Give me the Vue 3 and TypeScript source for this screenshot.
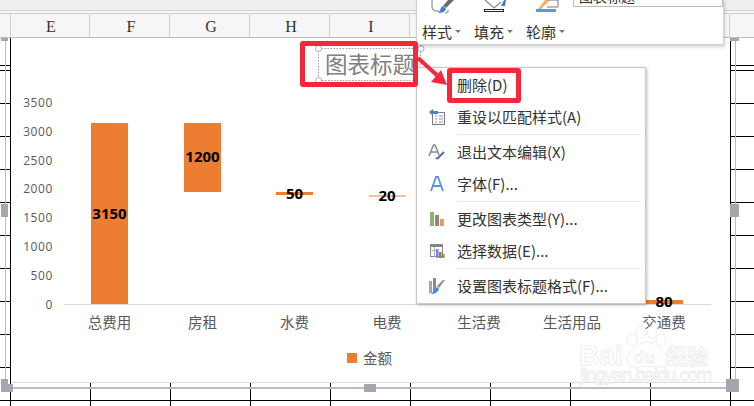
<script setup lang="ts">
const columns: string[] = ['E', 'F', 'G', 'H', 'I', 'J', 'K', 'L', 'M']

const yTicks = [
  { label: '3500', y: 102 }, { label: '3000', y: 131 }, { label: '2500', y: 160 }, { label: '2000', y: 188.5 },
  { label: '1500', y: 217.5 }, { label: '1000', y: 246 }, { label: '500', y: 275 }, { label: '0', y: 304 },
]

const bars = [
  { name: '总费用', x: 91, y: 123, h: 181, value: '3150', ly: 213, cx: 109.5 },
  { name: '房租', x: 184, y: 123, h: 69, value: '1200', ly: 156, cx: 202.5 },
  { name: '水费', x: 276, y: 192, h: 3, value: '50', ly: 192.5, cx: 294.5 },
  { name: '电费', x: 369, y: 195.5, h: 1, value: '20', ly: 194.5, cx: 387 },
  { name: '生活费', x: 461, y: 300, h: 0, value: '', ly: 0, cx: 479 },
  { name: '生活用品', x: 553, y: 300, h: 0, value: '', ly: 0, cx: 572 },
  { name: '交通费', x: 646, y: 300, h: 4, value: '80', ly: 300.5, cx: 664 },
]

const toolGroups: string[] = ['样式', '填充', '轮廓']
</script>

<template>
  <div class="page">
    <div class="topbar"></div>
    <div class="colhead">
      <div class="corner"></div>
      <div v-for="c in columns" :key="c" class="col">{{ c }}</div>
    </div>

    <div class="sheet">
      <div class="chart-frame"></div>
      <span class="handle h-tl"></span>
      <span class="handle h-tr"></span>
      <span class="handle h-ml"></span>
      <span class="handle h-mr"></span>
      <span class="handle h-bl"></span>
      <span class="handle h-bl2"></span>
      <span class="handle h-bm"></span>
      <span class="handle h-br"></span>

      <svg class="chart" width="719" height="344" viewBox="11 38 719 344">
        <text v-for="t in yTicks" :key="t.label" class="ytick" x="53" :y="t.y" text-anchor="end" dominant-baseline="central">{{ t.label }}</text>
        <line x1="64" y1="304.5" x2="711" y2="304.5" stroke="#d9d9d9" />
        <template v-for="b in bars" :key="b.name">
          <rect v-if="b.h" :x="b.x" :y="b.y" width="37" :height="b.h" fill="#ed7d31" />
          <text class="cat" :x="b.cx" y="321" text-anchor="middle" dominant-baseline="central">{{ b.name }}</text>
          <text v-if="b.value" class="val" :x="b.cx" :y="b.ly" text-anchor="middle" dominant-baseline="central">{{ b.value }}</text>
        </template>
        <rect x="347" y="353" width="10" height="10" fill="#ed7d31" />
        <text class="cat" x="363" y="357" dominant-baseline="central">金额</text>

        <text class="title" x="325" y="63" dominant-baseline="central">图表标题</text>
        <rect x="318.5" y="48.5" width="102" height="32" fill="none" stroke="#9a9a9a" stroke-dasharray="1.5 1.5" />
        <circle cx="318.5" cy="48.5" r="3" fill="#fff" stroke="#8fb4dc" />
        <circle cx="318.5" cy="80.5" r="3" fill="#fff" stroke="#8fb4dc" />
        <circle cx="421" cy="48.5" r="3" fill="#fff" stroke="#8fb4dc" />

        <g class="wm">
          <text x="579" y="365" font-size="28" font-weight="700">Bai</text>
          <path d="M647 342c8 0 13 7 18 12 6 6 1 14-7 13-7-1-14-1-21 0-8 1-13-7-8-13 5-5 10-12 18-12z" />
          <ellipse cx="632" cy="340" rx="5" ry="6" />
          <ellipse cx="641" cy="332" rx="5" ry="6" />
          <ellipse cx="652" cy="332" rx="5" ry="6" />
          <ellipse cx="661" cy="340" rx="5" ry="6" />
          <text x="634" y="363" font-size="17" font-weight="700">du</text>
          <text x="666" y="364" font-size="21" font-weight="700" class="wm-cjk">经验</text>
          <text x="580" y="381" font-size="18" textLength="132">jingyan.baidu.com</text>
        </g>
      </svg>
    </div>

    <div class="toolbar">
      <div v-for="(g, i) in toolGroups" :key="g" class="tool">
        <svg class="tool-icon" width="30" height="14" viewBox="0 0 30 14">
          <g v-if="i === 0">
            <path d="M5 0v6c0 3 2 5 5 5h2" fill="none" stroke="#a8a8a8" stroke-width="1.5" />
            <path d="M27 0 19 8l-3-2 5-6z" fill="#6d6d6d" />
            <path d="M16 6l3 3c-1 3-4 4-8 4 2-1 2-5 5-7z" fill="#3f7fd8" />
            <path d="M21 10v1c0 1-1 2-3 2" fill="none" stroke="#a8a8a8" stroke-width="1.5" />
          </g>
          <g v-else-if="i === 1">
            <path d="M6 0l9 8 7-6" fill="none" stroke="#8a8a8a" stroke-width="1.2" />
            <path d="M22 6l3-6h2l-1 6z" fill="#3f7fd8" />
            <rect x="5.5" y="9.5" width="19" height="2" fill="#fff" stroke="#222" />
          </g>
          <g v-else>
            <path d="M7 9 14 0h5l-9 9z" fill="#f0b060" />
            <path d="M7 9l3 0-4 1z" fill="#555" />
            <path d="M17 0h10M27 0v7H16" fill="none" stroke="#777" />
            <rect x="5" y="9" width="20" height="3" fill="#5b9bd5" />
          </g>
        </svg>
        <div class="tool-label">
          <span>{{ g }}</span><i class="caret"></i>
        </div>
      </div>
      <div class="tool-input"><span>图表标题</span></div>
    </div>

    <div class="menu">
      <div class="item"><span class="ico"></span>删除(D)</div>
      <div class="item">
        <span class="ico">
          <svg width="18" height="18" viewBox="0 0 18 18">
            <rect x="4.5" y="4.5" width="12" height="12" fill="#fff" stroke="#7d7d88" />
            <path d="M7 8h2M11 8h4M7 11h2M11 11h4M7 14h2M11 14h4" stroke="#8d8d96" />
            <path d="M1 4l4-3v2h5v3H5v2z" fill="#4d7fc4" />
          </svg>
        </span>重设以匹配样式(A)
      </div>
      <div class="sep"></div>
      <div class="item">
        <span class="ico">
          <svg width="18" height="18" viewBox="0 0 18 18">
            <path d="M1 13 5.5 2h1.5L11 12M3 9h6" fill="none" stroke="#8a8a94" stroke-width="1.6" />
            <path d="M9 16 16 9" stroke="#4a6fb0" stroke-width="2" />
            <path d="M7 16h2v-2z" fill="#d8322f" />
          </svg>
        </span>退出文本编辑(X)
      </div>
      <div class="item">
        <span class="ico">
          <svg width="18" height="18" viewBox="0 0 18 18">
            <path d="M3 16 8 2h2l5 14M5 11h8" fill="none" stroke="#5b8fe8" stroke-width="1.8" />
          </svg>
        </span>字体(F)...
      </div>
      <div class="sep"></div>
      <div class="item">
        <span class="ico">
          <svg width="18" height="18" viewBox="0 0 18 18">
            <rect x="2" y="2" width="4" height="14" fill="#8db46e" />
            <rect x="7" y="5" width="4" height="11" fill="#8a8a8a" />
            <rect x="12" y="9" width="4" height="7" fill="#f09a60" />
          </svg>
        </span>更改图表类型(Y)...
      </div>
      <div class="item">
        <span class="ico">
          <svg width="18" height="18" viewBox="0 0 18 18">
            <rect x="2.5" y="2.5" width="12" height="12" fill="#fff" stroke="#858590" />
            <rect x="2" y="2" width="13" height="3" fill="#858590" />
            <path d="M6.5 5v10M2 8.5h6" stroke="#b5b5bc" />
            <rect x="8" y="7" width="2.5" height="9" fill="#5b8fe8" />
            <rect x="11" y="10" width="2.5" height="6" fill="#e8563a" />
            <rect x="14" y="12" width="2.5" height="4" fill="#58a84a" />
          </svg>
        </span>选择数据(E)...
      </div>
      <div class="sep"></div>
      <div class="item">
        <span class="ico">
          <svg width="18" height="18" viewBox="0 0 18 18">
            <rect x="1" y="4" width="3" height="12" fill="#a5a5ad" />
            <rect x="5" y="1" width="3" height="15" fill="#8a8a94" />
            <path d="M17 3 11 11 9 9l6-6z" fill="#8a8a94" />
            <path d="M9 10l2 2c-1 3-4 5-8 5 2-1 3-5 6-7z" fill="#3f8fe8" />
          </svg>
        </span>设置图表标题格式(F)...
      </div>
    </div>

    <div class="red-box box-title"></div>
    <div class="red-box box-del"></div>
    <svg class="arrow" width="40" height="40" viewBox="0 0 40 40">
      <path d="M3 3 24 22" stroke="#f5283a" stroke-width="4" />
      <path d="M32 30 16 27 26 15z" fill="#f5283a" />
    </svg>
  </div>
</template>

<style>
html, body { margin: 0; background: #fff; overflow: hidden; }
</style>

<style scoped>
.page {
  position: relative;
  width: 754px;
  height: 406px;
  overflow: hidden;
  background: #fff;
  font-family: "Noto Sans CJK SC", "Liberation Sans", sans-serif;
}
.topbar {
  height: 10px;
  background: #efefef;
  border-bottom: 1px solid #d2d2d2;
  box-shadow: 0 2px 0 #f6f6f6;
  margin-bottom: 2px;
}
.colhead {
  display: flex;
  height: 23px;
  border-top: 1px solid #cfcfcf;
  border-bottom: 1px solid #bdbdbd;
  background: #f6f6f6;
}
.corner { width: 10px; flex: none; border-right: 1px solid #cfcfcf; }
.col {
  width: 79px;
  flex: none;
  box-sizing: border-box;
  padding-left: 2px;
  border-right: 1px solid #cfcfcf;
  margin-right: 1px;
  text-align: center;
  font: 16px/25px "Liberation Serif", serif;
  color: #333;
}
.sheet {
  position: relative;
  height: 368px;
  background-color: #fff;
  background-image:
    repeating-linear-gradient(to bottom, #000 0 1px, transparent 1px 33px),
    repeating-linear-gradient(to right, #000 0 1px, transparent 1px 80px);
  background-position: 0 32px, 10px 0;
}
.chart-frame {
  position: absolute;
  left: 5px;
  top: 0;
  width: 731px;
  height: 351px;
  box-sizing: border-box;
  border-left: 1px solid #bbbbc0;
  border-right: 1px solid #bbbbc0;
  border-bottom: 2px solid #bbbbc0;
}
.chart {
  position: absolute;
  left: 11px;
  top: 0;
  display: block;
  overflow: visible;
  background: #fff;
  border-bottom: 1px solid #dcdcdc;
}
.sheet::after {
  content: "";
  position: absolute;
  left: 10px;
  top: 0;
  width: 721px;
  height: 345px;
  box-sizing: border-box;
  border-left: 1px solid #000;
  border-right: 1px solid #000;
  pointer-events: none;
}
.ytick { font: 12px "Open Sans", sans-serif; letter-spacing: 0.6px; fill: #595959; }
.cat { font: 14.5px "Noto Sans CJK SC", sans-serif; fill: #595959; }
.val { font: 700 15px "Open Sans", sans-serif; fill: #000; }
.title { font: 400 22.5px "Noto Sans CJK SC", sans-serif; fill: #7f7f7f; }
.wm { fill: #fff; stroke: #eeeeee; font-family: "Liberation Sans", sans-serif; }
.wm-cjk { font-family: "Noto Sans CJK SC", sans-serif; }

.handle { position: absolute; background: #a5a6b0; z-index: 2; }
.h-tl { left: 1px; top: 0; width: 7px; height: 3px; }
.h-tr { left: 730px; top: 0; width: 9px; height: 3px; }
.h-ml { left: 1px; top: 166px; width: 7px; height: 13px; }
.h-mr { left: 730px; top: 166px; width: 9px; height: 13px; }
.h-bl { left: 1px; top: 341px; width: 7px; height: 13px; }
.h-bl2 { left: 8px; top: 346px; width: 5px; height: 8px; }
.h-bm { left: 364px; top: 346px; width: 12px; height: 8px; }
.h-br { left: 726px; top: 341px; width: 13px; height: 13px; }

.toolbar {
  position: absolute;
  left: 416px;
  top: -1px;
  width: 308px;
  height: 46px;
  box-sizing: border-box;
  display: flex;
  padding-left: 5px;
  background: #fff;
  border: 1px solid #d0d0d0;
  box-shadow: 1px 2px 3px rgba(0, 0, 0, 0.18);
}
.tool { width: 52px; flex: none; }
.tool-icon { display: block; margin-left: 5px; height: 14px; }
.tool-label {
  display: flex;
  align-items: center;
  gap: 3px;
  margin-top: 9px;
  font-size: 15px;
  line-height: 18px;
  color: #333;
}
.caret {
  display: block;
  width: 0;
  height: 0;
  margin-top: -1px;
  border-left: 3px solid transparent;
  border-right: 3px solid transparent;
  border-top: 3px solid #777;
}
.tool-input {
  position: absolute;
  left: 156px;
  top: 0;
  width: 150px;
  height: 7px;
  box-sizing: border-box;
  border: 1px solid #bdbdbd;
  border-top: 0;
  overflow: hidden;
  font-size: 14px;
  line-height: 18px;
  color: #333;
}
.tool-input span { display: block; margin: -13px 0 0 5px; }

.menu {
  position: absolute;
  left: 416px;
  top: 67px;
  width: 230px;
  height: 237px;
  box-sizing: border-box;
  padding-top: 2px;
  background: #fff;
  border: 1px solid #c8c8c8;
  box-shadow: 1px 1px 3px rgba(0, 0, 0, 0.25);
  z-index: 3;
}
.item {
  display: flex;
  align-items: center;
  height: 32px;
  box-sizing: border-box;
  padding: 0 0 3px 11px;
  font-size: 15px;
  color: #333;
  white-space: nowrap;
}
.ico { width: 18px; height: 18px; flex: none; margin-right: 11px; }
.ico svg { display: block; }
.sep { height: 3px; margin: 0 4px 0 40px; box-sizing: border-box; border-top: 1px solid #e6e6e6; }

.red-box {
  position: absolute;
  box-sizing: border-box;
  border: 5px solid #f5283a;
  border-radius: 3px;
  z-index: 4;
}
.box-title { left: 300px; top: 41px; width: 118px; height: 46px; }
.box-del { left: 447px; top: 68px; width: 74px; height: 35px; }
.arrow { position: absolute; left: 415px; top: 55px; z-index: 4; }
</style>
